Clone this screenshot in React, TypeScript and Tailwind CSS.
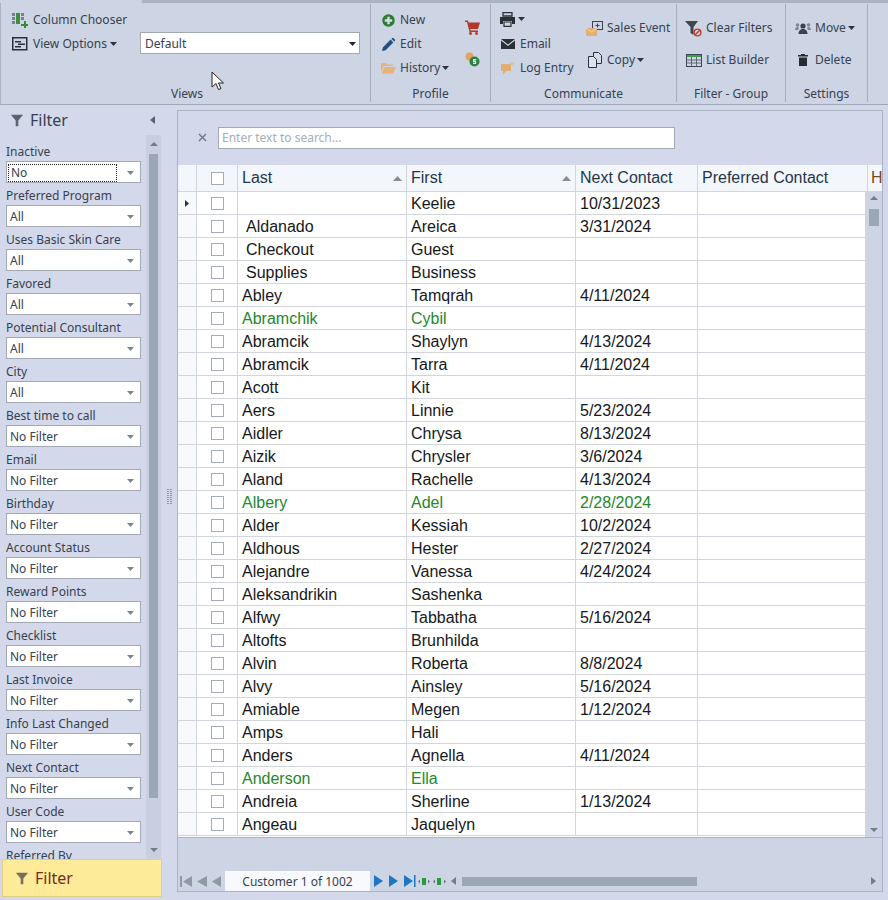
import React from "react";

const rows: [string, string, string, boolean?, boolean?][] = [
  ["", "Keelie", "10/31/2023"],
  [" Aldanado", "Areica", "3/31/2024"],
  [" Checkout", "Guest", ""],
  [" Supplies", "Business", ""],
  ["Abley", "Tamqrah", "4/11/2024"],
  ["Abramchik", "Cybil", "", true],
  ["Abramcik", "Shaylyn", "4/13/2024"],
  ["Abramcik", "Tarra", "4/11/2024"],
  ["Acott", "Kit", ""],
  ["Aers", "Linnie", "5/23/2024"],
  ["Aidler", "Chrysa", "8/13/2024"],
  ["Aizik", "Chrysler", "3/6/2024"],
  ["Aland", "Rachelle", "4/13/2024"],
  ["Albery", "Adel", "2/28/2024", true],
  ["Alder", "Kessiah", "10/2/2024"],
  ["Aldhous", "Hester", "2/27/2024"],
  ["Alejandre", "Vanessa", "4/24/2024"],
  ["Aleksandrikin", "Sashenka", ""],
  ["Alfwy", "Tabbatha", "5/16/2024"],
  ["Altofts", "Brunhilda", ""],
  ["Alvin", "Roberta", "8/8/2024"],
  ["Alvy", "Ainsley", "5/16/2024"],
  ["Amiable", "Megen", "1/12/2024"],
  ["Amps", "Hali", ""],
  ["Anders", "Agnella", "4/11/2024"],
  ["Anderson", "Ella", "", true],
  ["Andreia", "Sherline", "1/13/2024"],
  ["Angeau", "Jaquelyn", ""],
];

const filters: [string, string][] = [
  ["Inactive", "No"],
  ["Preferred Program", "All"],
  ["Uses Basic Skin Care", "All"],
  ["Favored", "All"],
  ["Potential Consultant", "All"],
  ["City", "All"],
  ["Best time to call", "No Filter"],
  ["Email", "No Filter"],
  ["Birthday", "No Filter"],
  ["Account Status", "No Filter"],
  ["Reward Points", "No Filter"],
  ["Checklist", "No Filter"],
  ["Last Invoice", "No Filter"],
  ["Info Last Changed", "No Filter"],
  ["Next Contact", "No Filter"],
  ["User Code", "No Filter"],
];

const Caret = ({ c = "#2c3440" }: { c?: string }) => (
  <svg width="7" height="4" viewBox="0 0 7 4" className="shrink-0"><path d="M0 0h7L3.5 4z" fill={c} /></svg>
);

const FunnelIcon = ({ s = 16, c = "#5a6370" }: { s?: number; c?: string }) => (
  <svg width={s} height={s} viewBox="0 0 16 16" className="shrink-0"><path d="M1 2h14L9.500 8.500V15h-3V8.500z" fill={c} /></svg>
);

const Icons = {
  columns: (
    <svg width="16" height="16" viewBox="0 0 16 16">
      <path d="M0 1h3v3H0zM0 5h3v3H0zM0 9h3v3H0z" fill="#7c8088" />
      <path d="M4 1h4v11H4z" fill="#3f8f3f" />
      <path d="M9 1h3v3H9zM9 5h3v3H9z" fill="#7c8088" />
      <path d="M12 9h2v3h2v2h-2v2h-2v-2H9v-2h3z" fill="#2f8f2f" />
    </svg>
  ),
  view: (
    <svg width="16" height="14" viewBox="0 0 16 14">
      <rect x="0.750" y="0.750" width="14" height="12" fill="none" stroke="#26313d" strokeWidth="1.500" />
      <path d="M3 4h6v1.500H3zM6 6.500h7V8H6zM3 9h6v1.500H3z" fill="#26313d" />
    </svg>
  ),
  plus: (
    <svg width="13" height="13" viewBox="0 0 13 13">
      <circle cx="6.500" cy="6.500" r="6.200" fill="#2e7a35" />
      <path d="M5.300 2.800h2.400v2.500h2.500v2.400H7.700v2.500H5.300V7.700H2.800V5.300h2.500z" fill="#d6dde8" />
    </svg>
  ),
  pencil: (
    <svg width="13" height="13" viewBox="0 0 13 13">
      <path d="M0 13l.8-3.600L8.600 1.600l2.800 2.800-7.800 7.800zM9.400.8l.7-.7a1 1 0 0 1 1.300 0l1.500 1.500a1 1 0 0 1 0 1.300l-.7.7z" fill="#24517f" />
    </svg>
  ),
  folder: (
    <svg width="15" height="12" viewBox="0 0 15 12">
      <path d="M0 1h5l1 1.500h6V4H3L0 10z" fill="#e3b57d" />
      <path d="M3.500 5H15l-2.800 6.500H.6z" fill="#e6b47a" />
    </svg>
  ),
  cart: (
    <svg width="15" height="15" viewBox="0 0 15 15">
      <path d="M0 .5h3l.6 2H15l-2 6.500H5.200l.4 1.500H13V12H4.500L2 2H0z" fill="#b5372a" />
      <circle cx="5.500" cy="13.500" r="1.400" fill="#b5372a" />
      <circle cx="11.500" cy="13.500" r="1.400" fill="#b5372a" />
    </svg>
  ),
  money: (
    <svg width="15" height="15" viewBox="0 0 15 15">
      <circle cx="4.500" cy="4.500" r="4" fill="#dfa45f" />
      <circle cx="9.500" cy="9.500" r="5" fill="#2e8040" />
      <path d="M11.300 7.600H8.600v1.800h2v2H8" fill="none" stroke="#e7ecf2" strokeWidth="1.100" />
    </svg>
  ),
  printer: (
    <svg width="15" height="15" viewBox="0 0 15 15">
      <path d="M3 .6h9V4H3z" fill="none" stroke="#2b3036" strokeWidth="1.300" />
      <path d="M0 5h15v7h-3V9H3v3H0z" fill="#2b3036" />
      <path d="M4 10h7v4.400H4z" fill="none" stroke="#2b3036" strokeWidth="1.200" />
    </svg>
  ),
  mail: (
    <svg width="14" height="10" viewBox="0 0 14 10">
      <path d="M0 0h14L7 5.500z" fill="#2b3036" />
      <path d="M0 1.500l7 5.500 7-5.500V10H0z" fill="#2b3036" />
    </svg>
  ),
  log: (
    <svg width="14" height="14" viewBox="0 0 14 14">
      <path d="M0 3h10v7H5.500L2 13.500V10H0z" fill="#e2ae77" />
      <path d="M11 0l.8 1.800 1.900.4-1.400 1.300.4 2L11 4.500l-1.700 1 .4-2L8.300 2.200l1.900-.4z" fill="#e9bf8a" />
    </svg>
  ),
  sales: (
    <svg width="17" height="15" viewBox="0 0 17 15">
      <rect x="6.500" y="0.500" width="10" height="8" fill="#cdd5e4" stroke="#3b4350" />
      <path d="M9.500 4.500h4M11.500 2.500v4" stroke="#3b4350" />
      <path d="M0 7h11v8H0z" fill="#e3ae78" />
      <path d="M0 7l5.500 4L11 7" fill="none" stroke="#f3d9b8" />
    </svg>
  ),
  copy: (
    <svg width="14" height="16" viewBox="0 0 14 16">
      <path d="M5.500.5h5l3 3v8h-8z" fill="#d5dbe8" stroke="#2c3440" />
      <path d="M.5 4.500h5l3 3v8h-8z" fill="#dde2ec" stroke="#2c3440" />
    </svg>
  ),
  clear: (
    <svg width="17" height="17" viewBox="0 0 17 17">
      <path d="M0 1h13L8.500 7v8l-3-2V7z" fill="#3e4650" />
      <circle cx="12.500" cy="12.500" r="3.400" fill="#cdd5e4" stroke="#c4392b" strokeWidth="1.400" />
      <path d="M10.200 14.800l4.600-4.600" stroke="#c4392b" strokeWidth="1.400" />
    </svg>
  ),
  list: (
    <svg width="16" height="13" viewBox="0 0 16 13">
      <path d="M0 0h16v3H0z" fill="#3f9a52" />
      <rect x="0.500" y="0.500" width="15" height="12" fill="none" stroke="#3d4650" />
      <path d="M1 6h14M1 9h14M5.500 3v9.500M10.500 3v9.500" stroke="#4a535e" strokeWidth="0.800" />
    </svg>
  ),
  move: (
    <svg width="16" height="13" viewBox="0 0 16 13">
      <circle cx="8" cy="4" r="2.600" fill="#3a4250" />
      <path d="M3.500 12c0-3.500 2-5 4.500-5s4.500 1.500 4.500 5z" fill="#3a4250" />
      <circle cx="2.500" cy="3" r="1.800" fill="#7d8591" />
      <circle cx="13.500" cy="3" r="1.800" fill="#7d8591" />
      <path d="M0 8c0-2 1-3 3-3l1 1-1 2zM16 8c0-2-1-3-3-3l-1 1 1 2z" fill="#7d8591" />
    </svg>
  ),
  trash: (
    <svg width="10" height="12" viewBox="0 0 10 12">
      <path d="M3 0h4v1h3v1.500H0V1h3zM1 3.500h8V12H1z" fill="#272c32" />
    </svg>
  ),
};

const Item = ({ icon, label, caret, w = "w-4", gap = "gap-[5px]" }: { icon: React.ReactNode; label?: string; caret?: boolean; w?: string; gap?: string }) => (
  <div className={`flex items-center ${gap} text-[12px] leading-none text-[#37414f] whitespace-nowrap`}>
    <span className={`flex justify-center items-center shrink-0 ${w}`}>{icon}</span>
    {label && <span>{label}</span>}
    {caret && <span className="-ml-[2px]"><Caret /></span>}
  </div>
);

const Group = ({ label, w, children }: { label: string; w: string; children: React.ReactNode }) => (
  <div className={`flex flex-col h-[98px] shrink-0 ${w} border-r border-[#a3adbb]`}>
    <div className="flex-1 min-h-0 flex">{children}</div>
    <div className="h-[18px] pt-[2px] flex items-center justify-center text-[12px] leading-none text-[#37414f]">{label}</div>
  </div>
);

const Check = () => (
  <span className="block w-[13px] h-[13px] bg-white border border-[#a6acb6]" />
);

export default function App() {
  return (
    <div className="w-[888px] h-[900px] overflow-hidden flex flex-col bg-[#cdd5e4] font-[Noto_Sans,sans-serif]">
      <div className="h-[3px] shrink-0 flex">
        <div className="w-[143px] bg-[#cdd5e4] border-r border-[#a9b3c1]" />
        <div className="flex-1 bg-[#a9b3c1]" />
      </div>

      {/* Ribbon */}
      <div className="relative h-[102px] shrink-0 flex items-start pt-[1px] pl-[3px] border-b border-[#9ea8b7] border-l border-l-[#a9b3c1]">
        <Group label="Views" w="w-[367px]">
          <div className="flex flex-col pl-[8px] pt-[4px] w-[136px] shrink-0">
            <div className="h-[24px] flex items-center"><Item icon={Icons.columns} label="Column Chooser" /></div>
            <div className="h-[24px] flex items-center"><Item icon={Icons.view} label="View Options" caret /></div>
          </div>
          <div className="mt-[28px] w-[220px] h-[22px] bg-white border border-[#a2a9b5] flex items-center justify-between pl-[4px] pr-[3px] pt-[1px] text-[12px] text-[#37414f]">
            <span>Default</span><Caret c="#20262e" />
          </div>
          <svg width="14" height="20" viewBox="0 0 14 20" className="absolute left-[210px] top-[68px]">
            <path d="M1 1v15l4-3.500 2.500 6 2.500-1-2.500-5.500h5z" fill="#fff" stroke="#222" />
          </svg>
        </Group>

        <Group label="Profile" w="w-[120px]">
          <div className="flex flex-col pl-[10px] pt-[4px] w-[100px]">
            <div className="h-[24px] flex items-center"><Item icon={Icons.plus} label="New" w="w-[15px]" gap="gap-[4px]" /></div>
            <div className="h-[24px] flex items-center"><Item icon={Icons.pencil} label="Edit" w="w-[15px]" gap="gap-[4px]" /></div>
            <div className="h-[24px] flex items-center"><Item icon={Icons.folder} label="History" caret w="w-[15px]" gap="gap-[4px]" /></div>
          </div>
          <div className="flex flex-col items-center pt-[16px] w-[15px] ml-[-6px] gap-[17px]">
            <span className="block h-[15px]">{Icons.cart}</span>
            <span className="block h-[15px]">{Icons.money}</span>
          </div>
        </Group>

        <Group label="Communicate" w="w-[186px]">
          <div className="flex flex-col pl-[9px] pt-[4px] w-[95px]">
            <div className="h-[24px] pb-[2px] flex items-center gap-[3px]">{Icons.printer}<Caret /></div>
            <div className="h-[24px] flex items-center"><Item icon={Icons.mail} label="Email" w="w-[15px]" /></div>
            <div className="h-[24px] flex items-center"><Item icon={Icons.log} label="Log Entry" w="w-[15px]" /></div>
          </div>
          <div className="flex flex-col pt-[8px]">
            <div className="h-[32px] flex items-center"><Item icon={Icons.sales} label="Sales Event" w="w-[17px]" gap="gap-[4px]" /></div>
            <div className="h-[32px] flex items-center"><Item icon={Icons.copy} label="Copy" caret w="w-[17px]" gap="gap-[4px]" /></div>
          </div>
        </Group>

        <Group label="Filter - Group" w="w-[109px]">
          <div className="flex flex-col pl-[8px] pt-[8px]">
            <div className="h-[32px] flex items-center"><Item icon={Icons.clear} label="Clear Filters" w="w-[17px]" gap="gap-[4px]" /></div>
            <div className="h-[32px] flex items-center"><Item icon={Icons.list} label="List Builder" w="w-[17px]" gap="gap-[4px]" /></div>
          </div>
        </Group>

        <Group label="Settings" w="w-[82px]">
          <div className="flex flex-col pl-[9px] pt-[8px]">
            <div className="h-[32px] flex items-center"><Item icon={Icons.move} label="Move" caret w="w-[16px]" gap="gap-[4px]" /></div>
            <div className="h-[32px] flex items-center"><Item icon={Icons.trash} label="Delete" w="w-[16px]" gap="gap-[4px]" /></div>
          </div>
        </Group>
      </div>

      {/* Body */}
      <div className="flex-1 min-h-0 flex bg-[#d3d9ea]">
        {/* Filter panel */}
        <div className="w-[162px] shrink-0 flex flex-col pl-[2px] pb-[3px]">
          <div className="h-[30px] shrink-0 flex items-center pl-[8px] pr-[7px] justify-between">
            <div className="flex items-center gap-[6px] text-[16px] leading-none text-[#37414f]">
              <FunnelIcon s={14} />
              <span>Filter</span>
            </div>
            <svg width="5" height="8" viewBox="0 0 5 8"><path d="M5 0v8L0 4z" fill="#59626e" /></svg>
          </div>
          <div className="flex-1 min-h-0 flex overflow-hidden">
            <div className="w-[144px] shrink-0 pl-[4px] pt-[4px] overflow-hidden">
              {filters.map(([l, v], i) => (
                <div key={l} className="w-[135px] h-[44px]">
                  <div className="h-[22px] flex items-end pb-[3px] text-[12px] leading-none text-[#37414f] whitespace-nowrap">{l}</div>
                  <div className="h-[22px] pt-[1px] bg-white border border-[#a2a9b5] flex items-center justify-between pl-[3px] pr-[6px] text-[12px] leading-none text-[#37414f]">
                    {i === 0 ? (
                      <span className="flex-1 mr-[10px] -ml-[2px] pl-[2px] h-[18px] flex items-center border border-dotted border-[#222]">{v}</span>
                    ) : (
                      <span>{v}</span>
                    )}
                    <Caret c="#7d8591" />
                  </div>
                </div>
              ))}
              <div className="h-[22px] flex items-end pb-[3px] text-[12px] leading-none text-[#37414f]">Referred By</div>
            </div>
            <div className="w-[15px] shrink-0 mt-[-1px] bg-[#c9cfe0] flex flex-col items-center pt-[8px] pb-[7px]">
              <svg width="8" height="4" viewBox="0 0 8 4" className="shrink-0"><path d="M0 4h8L4 0z" fill="#737c89" /></svg>
              <div className="w-[9px] h-[644px] bg-[#9ca7b5] mt-[8px] shrink-0" />
              <div className="flex-1" />
              <svg width="8" height="4" viewBox="0 0 8 4" className="shrink-0"><path d="M0 0h8L4 4z" fill="#737c89" /></svg>
            </div>
          </div>
          <div className="h-[38px] shrink-0 bg-[#fdeb9a] border border-[#e3cf83] flex items-center pl-[12px] gap-[6px] text-[16px] leading-none text-[#7a2a20]">
            <FunnelIcon s={14} c="#77705a" />
            <span>Filter</span>
          </div>
        </div>

        {/* Splitter */}
        <div className="w-[15px] shrink-0 flex items-center justify-center pb-[12px]">
          <div className="grid grid-cols-2 gap-[1px] w-[5px]">
            {Array.from({ length: 16 }).map((_, i) => (
              <span key={i} className="block w-[2px] h-[1px] bg-[#8e97a6]" />
            ))}
          </div>
        </div>

        {/* Grid panel */}
        <div className="w-[706px] shrink-0 mt-[5px] mb-[8px] border border-[#a9b3c1] flex flex-col">
          <div className="h-[54px] shrink-0 flex items-center pl-[20px] pb-[2px] gap-[11px] pt-[1px]">
            <svg width="9" height="9" viewBox="0 0 9 9"><path d="M1 1l7 7M8 1L1 8" stroke="#6d7681" strokeWidth="1.400" /></svg>
            <div className="w-[457px] h-[22px] bg-white border border-[#a2a9b5] flex items-center pl-[3px] text-[12px] leading-none text-[#a4adb9]">Enter text to search...</div>
          </div>

          {/* Header */}
          <div className="h-[27px] shrink-0 flex bg-[#f3f6fb] border-b border-[#d2d5de] text-[#24364b] font-[Liberation_Sans,Arial,sans-serif] text-[16px] leading-none">
            <div className="w-[19px] shrink-0 border-r border-[#d2d5de]" />
            <div className="w-[41px] shrink-0 border-r border-[#d2d5de] flex items-center justify-center"><Check /></div>
            <div className="w-[169px] shrink-0 border-r border-[#d2d5de] flex items-center justify-between pl-[4px] pr-[4px]">
              <span>Last</span>
              <svg width="9" height="5" viewBox="0 0 9 5"><path d="M0 5h9L4.500 0z" fill="#858c98" /></svg>
            </div>
            <div className="w-[169px] shrink-0 border-r border-[#d2d5de] flex items-center justify-between pl-[4px] pr-[4px]">
              <span>First</span>
              <svg width="9" height="5" viewBox="0 0 9 5"><path d="M0 5h9L4.500 0z" fill="#858c98" /></svg>
            </div>
            <div className="w-[122px] shrink-0 border-r border-[#d2d5de] flex items-center pl-[4px]">Next Contact</div>
            <div className="w-[170px] shrink-0 border-r border-[#d2d5de] flex items-center pl-[4px] whitespace-nowrap">Preferred Contact</div>
            <div className="flex-1 min-w-0 overflow-hidden flex items-center pl-[3px] text-[#7a4a20]">H</div>
          </div>

          <div className="flex flex-1 min-h-0">
            <div className="flex-1 min-w-0 overflow-hidden bg-white text-[#15181c] font-[Liberation_Sans,Arial,sans-serif] text-[16px] leading-none">
              {rows.map(([last, first, next, green], i) => (
                <div key={i} className={`h-[23px] flex border-b border-[#d2d5de] ${green ? "text-[#23872b]" : ""}`}>
                  <div className="w-[19px] shrink-0 border-r border-[#d2d5de] bg-[#f7f9fc] flex items-center justify-center">
                    {i === 0 && <svg width="4" height="7" viewBox="0 0 4 7"><path d="M0 0v7l4-3.500z" fill="#2b3440" /></svg>}
                  </div>
                  <div className="w-[41px] shrink-0 border-r border-[#d2d5de] flex items-center justify-center"><Check /></div>
                  <div className={`w-[169px] shrink-0 border-r border-[#d2d5de] pt-[2px] flex items-center ${last.startsWith(" ") ? "pl-[8px]" : "pl-[4px]"}`}>{last.trim()}</div>
                  <div className="w-[169px] shrink-0 border-r border-[#d2d5de] pt-[2px] flex items-center pl-[4px]">{first}</div>
                  <div className="w-[122px] shrink-0 border-r border-[#d2d5de] pt-[2px] flex items-center pl-[4px]">{next}</div>
                  <div className="w-[168px] shrink-0 border-r border-[#d2d5de]" />
                </div>
              ))}
            </div>
            <div className="w-[17px] shrink-0 flex flex-col items-center bg-[#cdd5e4] pt-[4px] pb-[5px]">
              <svg width="8" height="4" viewBox="0 0 8 4" className="shrink-0"><path d="M0 4h8L4 0z" fill="#737c89" /></svg>
              <div className="w-[10px] h-[17px] bg-[#9ca7b5] mt-[9px] shrink-0" />
              <div className="flex-1" />
              <svg width="8" height="4" viewBox="0 0 8 4" className="shrink-0"><path d="M0 0h8L4 4z" fill="#737c89" /></svg>
            </div>
          </div>

          {/* Footer */}
          <div className="h-[54px] shrink-0 bg-[#cdd5e4] border-t border-[#a9b3c1] flex flex-col">
            <div className="flex-1" />
            <div className="h-[20px] flex items-center">
              <div className="w-[47px] shrink-0 flex items-center pl-[2px] gap-[5px]">
                <svg width="12" height="11" viewBox="0 0 12 11"><path d="M0 0h2v11H0zM12 0v11L3 5.500z" fill="#8f99a6" /></svg>
                <svg width="10" height="11" viewBox="0 0 10 11"><path d="M10 0v11L0 5.500z" fill="#8f99a6" /></svg>
                <svg width="9" height="11" viewBox="0 0 9 11"><path d="M9 0v11L0 5.500z" fill="#8f99a6" /></svg>
              </div>
              <div className="w-[145px] h-[20px] pt-[1px] shrink-0 bg-[#f7f9fc] flex items-center justify-center text-[12px] leading-none text-[#37414f]">Customer 1 of 1002</div>
              <div className="w-[80px] shrink-0 flex items-center pl-[4px] gap-[6px]">
                <svg width="9" height="12" viewBox="0 0 9 12"><path d="M0 0v12l9-6z" fill="#1a76c7" /></svg>
                <svg width="9" height="12" viewBox="0 0 9 12"><path d="M0 0v12l9-6z" fill="#1a76c7" /></svg>
                <svg width="12" height="12" viewBox="0 0 12 12"><path d="M0 0v12l9-6zM10 0h1.500v12H10z" fill="#1a76c7" /></svg>
                <svg width="28" height="11" viewBox="0 0 28 11" className="-ml-[4px]">
                  <path d="M4 2h4v7H4zM19 2h4v7h-4z" fill="#2a9a3a" />
                  <path d="M0 5.500l2-2v4zM12 5.500l-2-2v4zM15 5.500l2-2v4zM28 5.500l-2-2v4z" fill="#6d7681" />
                </svg>
              </div>
              <div className="flex-1 flex items-center pl-[1px] pr-[6px]">
                <svg width="5" height="8" viewBox="0 0 5 8" className="shrink-0"><path d="M5 0v8L0 4z" fill="#737c89" /></svg>
                <div className="w-[235px] h-[9px] bg-[#9ca7b5] ml-[6px] shrink-0" />
                <div className="flex-1" />
                <svg width="5" height="8" viewBox="0 0 5 8" className="shrink-0"><path d="M0 0v8l5-4z" fill="#737c89" /></svg>
              </div>
            </div>
          </div>
        </div>
        <div className="flex-1" />
      </div>
    </div>
  );
}
